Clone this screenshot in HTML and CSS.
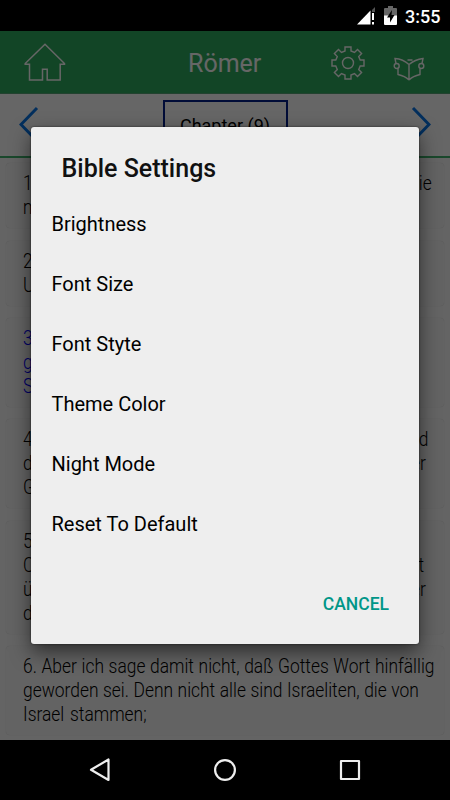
FILE: index.html
```html
<!DOCTYPE html>
<html lang="de">
<head>
<meta charset="utf-8">
<title>Bible Settings</title>
<link rel="stylesheet" href="styles.css">
</head>
<body>
<div class="phone">
  <div class="status">
    <svg width="18" height="18" viewBox="0 0 18 18"><path d="M18 0v5h-3V3z" fill="#555"/><path d="M0 17.500L13.500 3.500v14z" fill="#fff"/><path d="M15 6h2v7h-2zM15 15h2v2.500h-2z" fill="#fff"/></svg>
    <svg class="battery" width="13" height="19" viewBox="0 0 13 19"><path d="M1 2h3V0h5v2h3q1 0 1 1v7H0V3q0-1 1-1z" fill="#666"/><path d="M0 9.500h13V18q0 1-1 1H1q-1 0-1-1z" fill="#fff"/><path d="M8 4L3 11.500h3V16.500L10.500 9H7.500z" fill="#000"/></svg>
    <span class="clock">3:55</span>
  </div>
  <main class="app">
    <header class="toolbar">
      <svg class="home" width="42" height="39" viewBox="0 0 42 39"><path d="M21 1.200L1.200 20.500v.8h4.300V37h13V26.200h4.700V37h13V21.300h4.300v-.8z"/></svg>
      <h1>Römer</h1>
      <svg class="gear" width="34" height="34" viewBox="0 0 34 34"><circle cx="17" cy="17" r="5.500"/><path d="M14 1h6v4l3.500 1.500 3-3 4.100 4.100-2.900 3L29.200 14H33v6h-3.800l-1.500 3.500 2.900 3-4.100 4.100-3-3L20 29v4h-6v-4l-3.500-1.400-3 3-4.100-4.100 2.900-3L4.800 20H1v-6h3.800l1.500-3.400-2.900-3 4.100-4.100 3 3L14 5z"/></svg>
      <svg class="book" width="32" height="26" viewBox="0 0 32 26"><path d="M16 8.500v15.500M16 8.500Q10 3 2 2.500L3 7.500M16 8.500q6-5 14-6L29 7.500M16 24Q12 20 5 18.500V12.500M16 24Q20 20 27 18.500V12.500M14.500 4h5"/><circle cx="3.700" cy="10" r="2.500"/><circle cx="28.300" cy="10" r="2.500"/></svg>
    </header>
    <nav class="chapters">
      <svg width="20" height="36" viewBox="0 0 20 36"><path d="M18 2L2 18.500 18 35"/></svg>
      <div class="chapter">Chapter (9)</div>
      <svg width="20" height="36" viewBox="0 0 20 36"><path d="M2 2l16 16.500L2 35"/></svg>
    </nav>
    <div class="verses">
      <p class="verse"><span class="full w430">1. Ich sage die Wahrheit in Christus, ich lüge nicht, wie</span><span>mir mein Gewissen bezeugt im heiligen Geist,</span></p>
      <p class="verse"><span>2. daß ich große Traurigkeit und</span><span>Unablässigen Schmerz in meinem Herzen habe.</span></p>
      <p class="verse marked"><span>3. Ich wünschte nämlich selber</span><span>gebannt zu sein für meine Brüder,</span><span>Stammesgenossen nach dem Fleisch,</span></p>
      <p class="verse"><span class="full w430">4. die Israeliten sind, denen die Kindschaft und</span><span class="full w426">die Herrlichkeit und die Bündnisse und der</span><span>Gottesdienst und die Verheißungen;</span></p>
      <p class="verse"><span>5. ihnen gehören auch die Väter an,</span><span class="full w424">Christus dem Fleische nach, der da ist</span><span class="full w426">über alle, hochgelobter Gott, der</span><span>da sei in Ewigkeit! Amen.</span></p>
      <p class="verse"><span class="full w435">6. Aber ich sage damit nicht, daß Gottes Wort hinfällig</span><span class="full w419">geworden sei. Denn nicht alle sind Israeliten, die von</span><span class="full w147">Israel stammen;</span></p>
    </div>
    <div class="scrim">
      <section class="dialog">
        <h2>Bible Settings</h2>
        <ul>
          <li>Brightness</li><li>Font Size</li><li>Font Styte</li><li>Theme Color</li><li>Night Mode</li><li>Reset To Default</li>
        </ul>
        <button>CANCEL</button>
      </section>
    </div>
  </main>
  <footer class="navbar">
    <svg width="22" height="26" viewBox="0 0 22 26"><path d="M19.500 2.500v20.500L2 12.800z"/></svg>
    <svg width="24" height="26" viewBox="0 0 24 26"><circle cx="12" cy="13" r="9.900"/></svg>
    <svg width="22" height="26" viewBox="0 0 22 26"><rect x="2" y="4" width="18" height="18"/></svg>
  </footer>
</div>
</body>
</html>
```

FILE: styles.css
```css
* { box-sizing: border-box; }
body { margin: 0; font-family: Roboto, "Liberation Sans", sans-serif; color: #000; background: #000; }
.phone { width: 450px; height: 800px; display: flex; flex-direction: column; overflow: hidden; }
.status { height: 31px; display: flex; justify-content: flex-end; align-items: flex-start; padding: 7px 10px 0 0; color: #fff; }
.battery { margin: -1px 8px 0 9px; }
.clock { width: 35px; font-size: 18px; font-weight: 500; line-height: 20px; white-space: nowrap; }
.app { position: relative; height: 709px; background: #fff; overflow: hidden; }
svg { flex: none; fill: none; }
.toolbar { height: 63px; display: flex; align-items: flex-start; background: #2fac5f; border-bottom: 1px solid #55a675; padding: 12px 25px 0 24px; }
.toolbar svg { stroke: #fff; stroke-width: 1.5; }
.toolbar h1 { margin: 4px 0 0 122px; width: 143px; font-size: 25px; line-height: 34px; font-weight: 400; color: #fff; }
.gear { margin-top: 3px; }
.book { margin: 13px 0 0 28px; }
.toolbar .gear, .toolbar .book { stroke-width: 1.4; }
.chapters { height: 64px; border-bottom: 2px solid #43b56e; padding: 6px 19px 0; display: flex; justify-content: space-between; }
.chapters svg { stroke: #0877e8; stroke-width: 3; margin-top: 6px; }
.chapter { width: 125px; height: 50px; border: 2px solid #00208a; text-align: center; font-size: 18px; line-height: 48px; }
.verses { display: flex; flex-direction: column; gap: 12.300px; padding: 5.400px 6px; background: #fafafa; }
.verse { margin: 0; padding: 8px 0 9px 17px; border-radius: 4px; background: #f7f7f7; box-shadow: 0 0 1px #ccc; font-weight: 300; font-size: 20px; line-height: 24px; }
.verse span { display: block; width: max-content; white-space: nowrap; transform: scaleX(.87); transform-origin: left; }
.verse .full { text-align: justify; text-align-last: justify; }
.verse .w430 { width: 466px; }
.verse .w426 { width: 463px; }
.verse .w424 { width: 461px; }
.verse .w435 { width: 473px; }
.verse .w419 { width: 455px; }
.verse .w147 { width: 142px; }
.marked { color: #00f; }
.scrim { position: absolute; inset: 0; background: rgba(0, 0, 0, .6); padding: 96px 31px 0; }
.dialog { height: 517px; border-radius: 3px; background: #eee; box-shadow: 0 0 2px rgba(0, 0, 0, .7), 0 8px 20px rgba(0, 0, 0, .55); display: flex; flex-direction: column; }
.dialog h2 { margin: 25px 0 0 30.500px; font-size: 25px; line-height: 34px; font-weight: 500; color: #111; }
.dialog ul { margin: 8px 0 0; padding: 0 0 0 20.500px; list-style: none; }
.dialog li { height: 60px; line-height: 61px; font-size: 20px; }
.dialog button { align-self: flex-end; margin: 37px 30px 0 0; border: 0; padding: 0; background: none; color: #009688; font: 500 17.5px/26px Roboto, sans-serif; }
.navbar { height: 60px; display: flex; justify-content: space-between; align-items: center; padding: 0 89px; }
.navbar svg { stroke: #eee; stroke-width: 2.2; stroke-linejoin: round; }
```
